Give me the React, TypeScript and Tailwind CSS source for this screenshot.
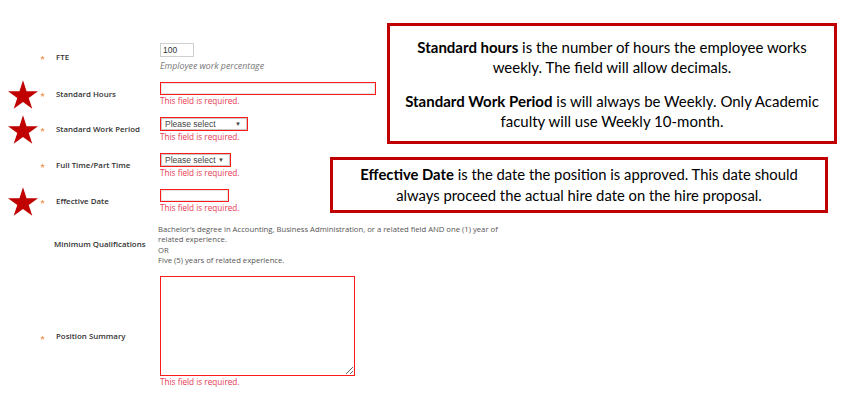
const RED = '#c00000';
const STAR = '50,0 61.8,36.3 100,36.3 69.1,58.8 80.9,95 50,72.6 19.1,95 30.9,58.8 0,36.3 38.2,36.3';

function BigStar() {
  return (
    <svg width="30" height="29" viewBox="0 0 100 95" className="ml-[8px] shrink-0">
      <polygon points={STAR} fill={RED} />
    </svg>
  );
}

function SmallStar() {
  return (
    <svg width="5" height="5" viewBox="0 0 100 95" className="ml-[0px]">
      <polygon points={STAR} fill="#f29a5a" />
    </svg>
  );
}

function Error() {
  return <div className="text-[8.2px] leading-[10px] text-[#e8384f] mt-[1px]">This field is required.</div>;
}

function Select({ width }: { width: string }) {
  return (
    <div
      className={`${width} h-[14px] border border-[#ff1a1a] bg-white shadow-[inset_0_0_0_1px_#c8c8c8] flex items-center justify-between pl-[4px] pr-[6px] text-[8.5px] text-[#444] font-['Liberation_Sans',Arial,sans-serif]`}
    >
      <span>Please select</span>
      <span className="text-[6px]">▼</span>
    </div>
  );
}

function Row({
  star,
  required = true,
  label,
  labelClass = '',
  children,
}: {
  star?: boolean;
  required?: boolean;
  label: string;
  labelClass?: string;
  children: React.ReactNode;
}) {
  return (
    <div className="flex items-center">
      <div className="w-[40px] h-0 flex items-center">{star && <BigStar />}</div>
      <div className="w-[16px] h-0 flex items-center">{required && <SmallStar />}</div>
      <div className={`w-[104px] text-[7.9px] leading-[11px] font-semibold text-[#333] ${labelClass}`}>{label}</div>
      <div>{children}</div>
    </div>
  );
}

export default function App() {
  return (
    <div className="relative w-[855px] h-[393px] bg-white overflow-hidden font-['Open_Sans',sans-serif]">
      <div className="flex flex-col gap-[11px] pt-[43px]">
        <Row label="FTE">
          <div className="w-[34px] h-[14px] border border-[#cfcfcf] text-[8.5px] text-[#333] pl-[2px] leading-[12px] font-['Liberation_Sans',Arial,sans-serif]">
            100
          </div>
          <div className="mt-[4px] text-[8.8px] leading-[10px] italic text-[#777]">Employee work percentage</div>
        </Row>

        <Row star label="Standard Hours">
          <div className="w-[216px] h-[13px] border border-[#ff1a1a] shadow-[inset_0_0_0_1px_#e6e6e6]" />
          <Error />
        </Row>

        <Row star label="Standard Work Period">
          <Select width="w-[88px]" />
          <Error />
        </Row>

        <Row label="Full Time/Part Time">
          <Select width="w-[71px]" />
          <Error />
        </Row>

        <Row star label="Effective Date">
          <div className="w-[69px] h-[13px] border border-[#ff1a1a] shadow-[inset_0_0_0_1px_#e6e6e6]" />
          <Error />
        </Row>

        <Row required={false} label="Minimum Qualifications" labelClass="-ml-[2px]">
          <div className="text-[7.7px] leading-[10.3px] text-[#555] w-[400px]">
            <div>Bachelor's degree in Accounting, Business Administration, or a related field AND one (1) year of</div>
            <div>related experience.</div>
            <div>OR</div>
            <div>Five (5) years of related experience.</div>
          </div>
        </Row>

        <div className="flex items-start">
          <div className="w-[40px]" />
          <div className="w-[16px] h-[100px] flex items-center pt-[22px]">
            <SmallStar />
          </div>
          <div className="w-[104px] h-[100px] flex items-center pt-[22px] text-[7.9px] font-semibold text-[#333]">
            Position Summary
          </div>
          <div>
            <textarea
              readOnly
              className="block w-[195px] h-[100px] border-[1.5px] border-[#ff1a1a] outline-none"
            />
            <Error />
          </div>
        </div>
      </div>

      <div
        className="absolute left-[387px] top-[23px] w-[450px] h-[121px] border-[3px] border-[#c00000] bg-white flex flex-col items-center justify-center gap-[14px] text-[15px] leading-[20px] text-black text-center font-['Lato',sans-serif]"
      >
        <p>
          <b>Standard hours</b> is the number of hours the employee works
          <br />
          weekly. The field will allow decimals.
        </p>
        <p>
          <b>Standard Work Period</b> is will always be Weekly. Only Academic
          <br />
          faculty will use Weekly 10-month.
        </p>
      </div>

      <div
        className="absolute left-[330px] top-[157px] w-[498px] h-[56px] border-[3px] border-[#c00000] bg-white flex flex-col items-center justify-center text-[14.8px] leading-[21px] text-black text-center font-['Lato',sans-serif]"
      >
        <p>
          <b>Effective Date</b> is the date the position is approved. This date should
          <br />
          always proceed the actual hire date on the hire proposal.
        </p>
      </div>
    </div>
  );
}
